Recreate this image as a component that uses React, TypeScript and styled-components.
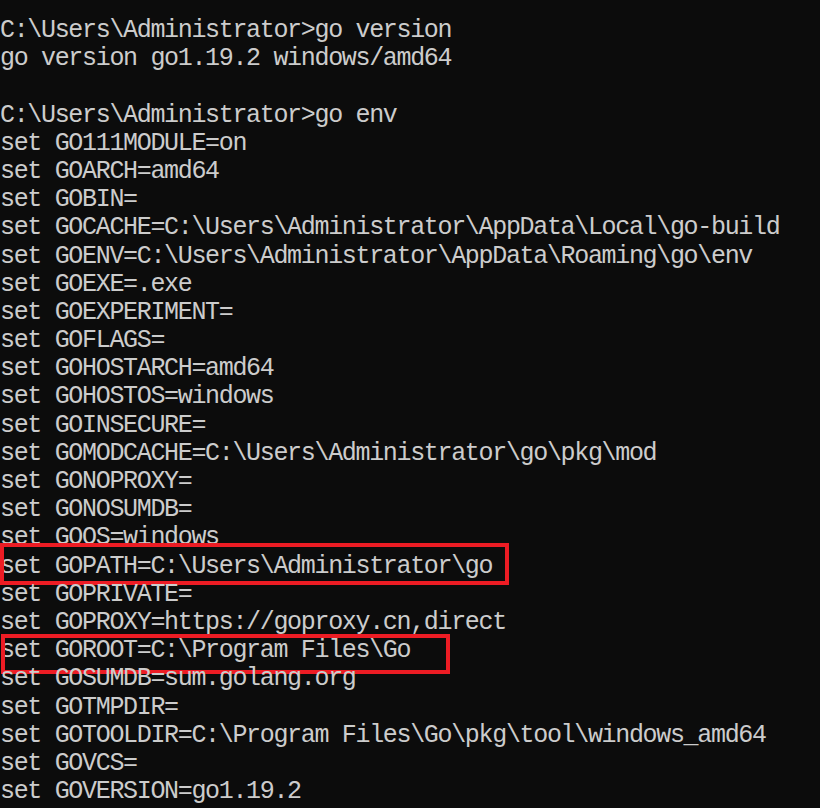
import React from "react";
import styled, { createGlobalStyle } from "styled-components";

const GlobalStyle = createGlobalStyle`
  html, body {
    margin: 0;
    padding: 0;
    background: #0c0c0c;
  }
  body {
    width: 820px;
    height: 808px;
    overflow: hidden;
  }
`;

const Console = styled.div`
  box-sizing: border-box;
  width: 820px;
  height: 808px;
  padding-top: 17px;
  background: #0c0c0c;
  color: #cccccc;
  font-family: "Liberation Mono", "Noto Sans CJK SC", monospace;
  font-size: 25px;
  letter-spacing: -1.33px;
  display: flex;
  flex-direction: column;
  overflow: hidden;
`;

const Line = styled.div`
  position: relative;
  height: 28.2px;
  line-height: 28.2px;
  white-space: pre;
  flex-shrink: 0;
`;

const Highlight = styled.span<{ $left: number; $width: number; $top: number; $height: number }>`
  position: absolute;
  left: ${(p) => p.$left}px;
  top: ${(p) => p.$top}px;
  width: ${(p) => p.$width}px;
  height: ${(p) => p.$height}px;
  box-sizing: border-box;
  border: 4px solid #ed1c24;
  pointer-events: none;
`;

type Row = {
  text: string;
  box?: { left: number; width: number; top: number; height: number };
};

const rows: Row[] = [
  { text: "C:\\Users\\Administrator>go version" },
  { text: "go version go1.19.2 windows/amd64" },
  { text: "" },
  { text: "C:\\Users\\Administrator>go env" },
  { text: "set GO111MODULE=on" },
  { text: "set GOARCH=amd64" },
  { text: "set GOBIN=" },
  { text: "set GOCACHE=C:\\Users\\Administrator\\AppData\\Local\\go-build" },
  { text: "set GOENV=C:\\Users\\Administrator\\AppData\\Roaming\\go\\env" },
  { text: "set GOEXE=.exe" },
  { text: "set GOEXPERIMENT=" },
  { text: "set GOFLAGS=" },
  { text: "set GOHOSTARCH=amd64" },
  { text: "set GOHOSTOS=windows" },
  { text: "set GOINSECURE=" },
  { text: "set GOMODCACHE=C:\\Users\\Administrator\\go\\pkg\\mod" },
  { text: "set GONOPROXY=" },
  { text: "set GONOSUMDB=" },
  { text: "set GOOS=windows" },
  {
    text: "set GOPATH=C:\\Users\\Administrator\\go",
    box: { left: 0, width: 509, top: -10, height: 42 },
  },
  { text: "set GOPRIVATE=" },
  { text: "set GOPROXY=https://goproxy.cn,direct" },
  {
    text: "set GOROOT=C:\\Program Files\\Go",
    box: { left: 1, width: 449, top: -3, height: 40 },
  },
  { text: "set GOSUMDB=sum.golang.org" },
  { text: "set GOTMPDIR=" },
  { text: "set GOTOOLDIR=C:\\Program Files\\Go\\pkg\\tool\\windows_amd64" },
  { text: "set GOVCS=" },
  { text: "set GOVERSION=go1.19.2" },
];

export default function App() {
  return (
    <>
      <GlobalStyle />
      <Console>
        {rows.map((r, i) => (
          <Line key={i}>
            {r.text}
            {r.box && (
              <Highlight
                $left={r.box.left}
                $width={r.box.width}
                $top={r.box.top}
                $height={r.box.height}
              />
            )}
          </Line>
        ))}
      </Console>
    </>
  );
}
